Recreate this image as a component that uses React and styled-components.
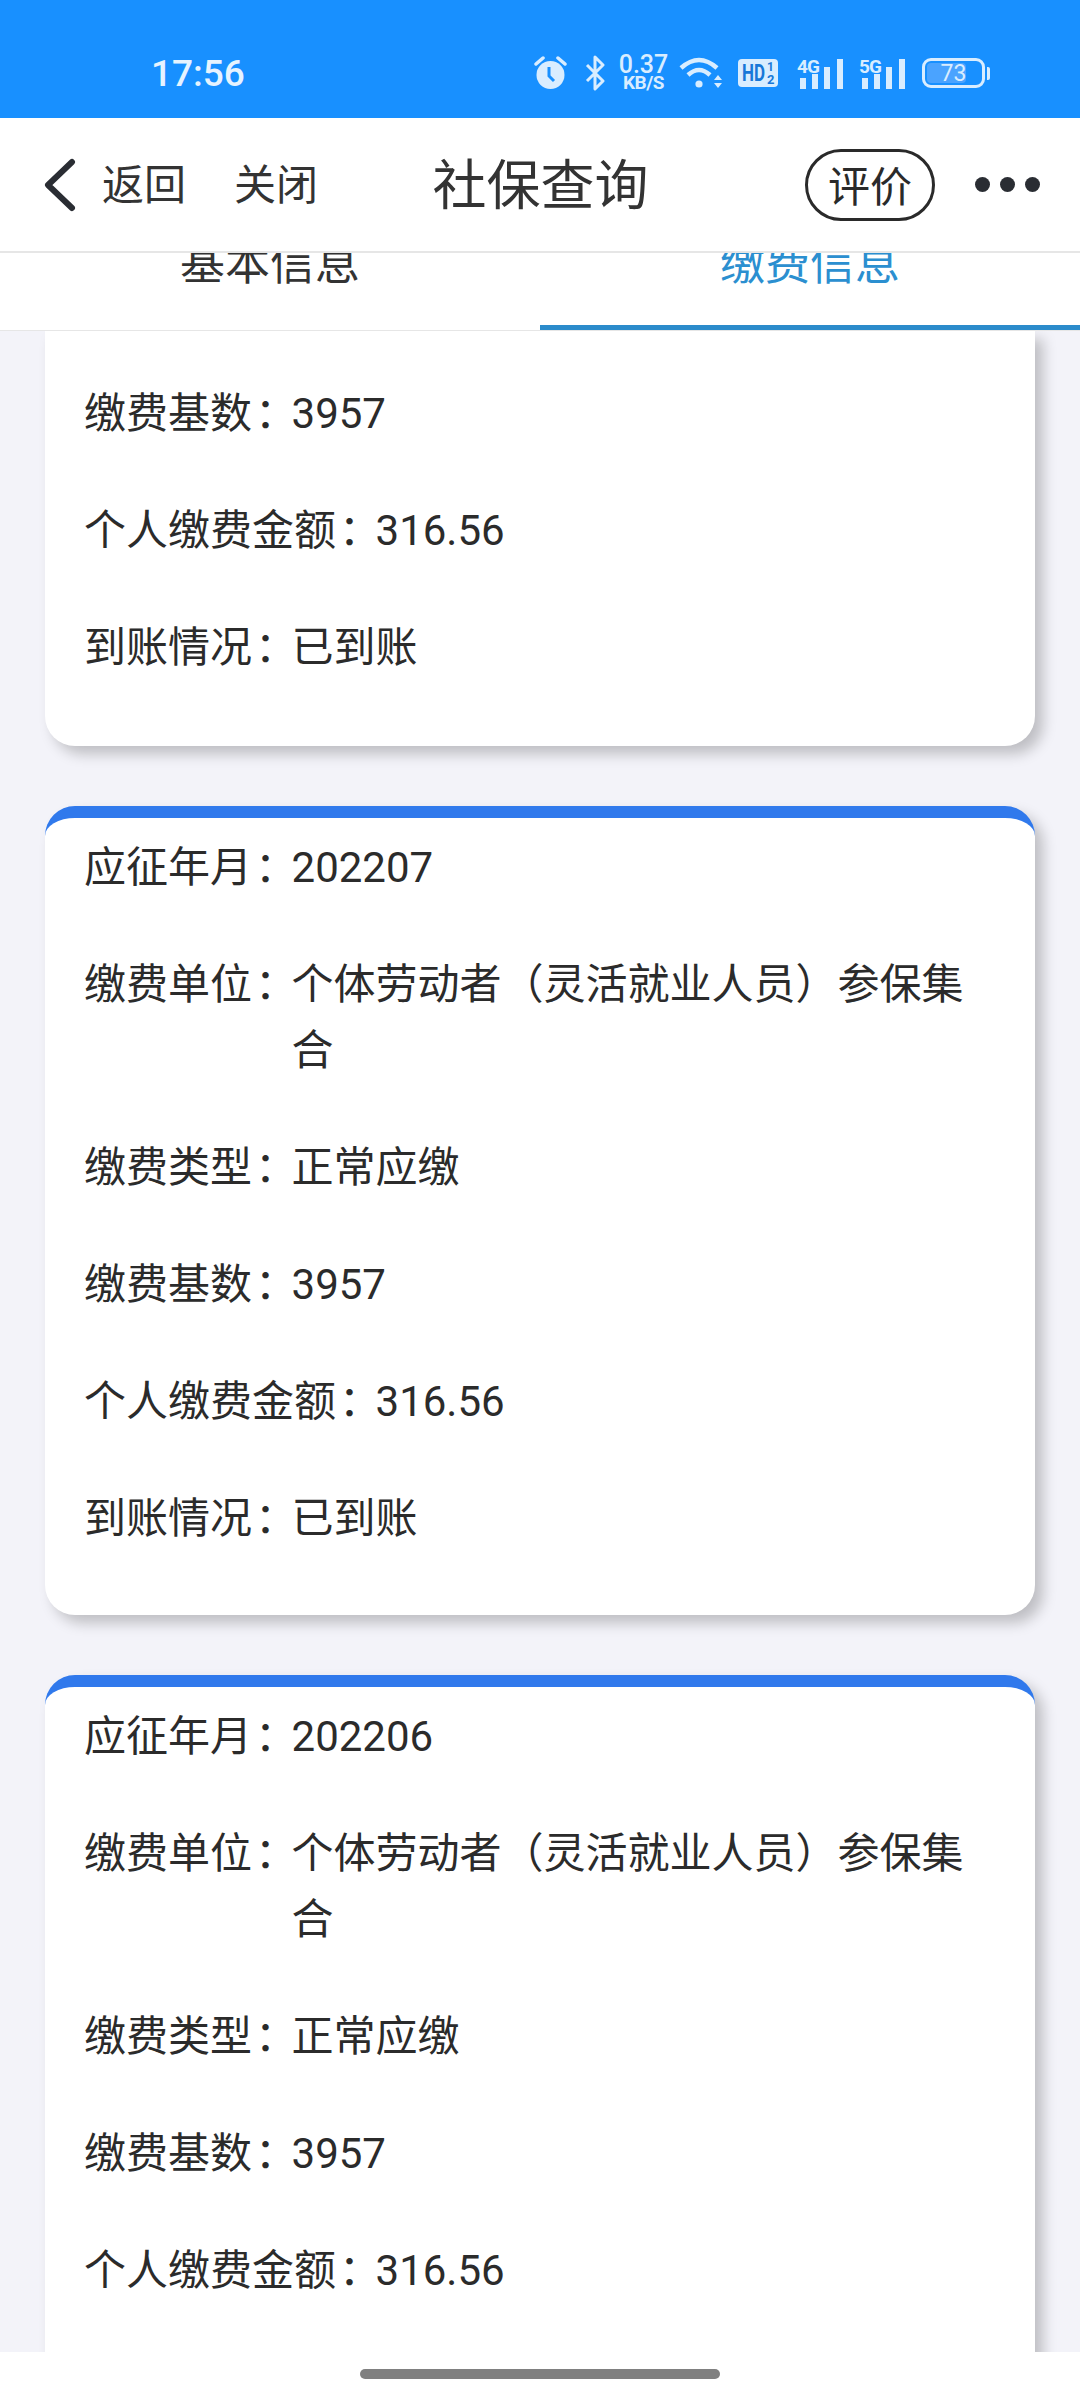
import React from "react";
import styled, { createGlobalStyle } from "styled-components";

const rows = {
  month: (m) => ["应征年月", m],
  unit: ["缴费单位", "个体劳动者（灵活就业人员）参保集合"],
  type: ["缴费类型", "正常应缴"],
  base: ["缴费基数", "3957"],
  amount: ["个人缴费金额", "316.56"],
  arrived: ["到账情况", "已到账"],
};

const cards = [
  { id: 1, cut: true, items: [rows.base, rows.amount, rows.arrived] },
  { id: 2, items: [rows.month("202207"), rows.unit, rows.type, rows.base, rows.amount, rows.arrived] },
  { id: 3, items: [rows.month("202206"), rows.unit, rows.type, rows.base, rows.amount, rows.arrived] },
];

function Signal({ label }) {
  return (
    <svg width="47" height="38" viewBox="0 -4 47 38">
      <text x="0" y="15" fontSize="19" fontWeight="700" fontFamily="Roboto, sans-serif" fill="#d9edff" letterSpacing="-1">
        {label}
      </text>
      <rect x="3" y="20" width="6" height="11" fill="#d9edff" />
      <rect x="15" y="16" width="6" height="15" fill="#d9edff" />
      <rect x="27" y="9" width="6" height="22" fill="#d9edff" />
      <rect x="40" y="1" width="6" height="30" fill="#d9edff" />
    </svg>
  );
}

function StatusIcons() {
  return (
    <StatusRight>
      <svg width="33" height="36" viewBox="0 0 33 36">
        <circle cx="16.5" cy="20" r="14" fill="#d9edff" />
        <path d="M15 12v9l5 5" fill="none" stroke="#1890ff" strokeWidth="3" />
        <path d="M2 9l7-6M31 9l-7-6" fill="none" stroke="#d9edff" strokeWidth="3.5" strokeLinecap="round" />
      </svg>
      <StatusGap $w={18} />
      <svg width="21" height="36" viewBox="0 0 21 36">
        <path d="M2 10l16 16-8 8V2l8 8L2 26" fill="none" stroke="#d9edff" strokeWidth="3" strokeLinejoin="round" />
      </svg>
      <StatusGap $w={14} />
      <NetSpeed>
        <b>0.37</b>
        <small>KB/S</small>
      </NetSpeed>
      <StatusGap $w={12} />
      <svg width="44" height="32" viewBox="0 0 44 32">
        <path d="M2 11Q20-5 38 11" fill="none" stroke="#d9edff" strokeWidth="4.5" />
        <path d="M9 18Q20 8 31 18" fill="none" stroke="#d9edff" strokeWidth="4.5" />
        <circle cx="20" cy="27" r="3.6" fill="#d9edff" />
        <path d="M39 18l4 5h-8zM35 26h8l-4 5z" fill="#d9edff" />
      </svg>
      <StatusGap $w={15} />
      <svg width="40" height="28" viewBox="0 0 40 28">
        <rect width="40" height="28" rx="4" fill="#d9edff" />
        <text x="4" y="22" fontSize="23" fontWeight="700" fontFamily="Roboto, sans-serif" fill="#1878d8" textLength="23" lengthAdjust="spacingAndGlyphs">
          HD
        </text>
        <text x="29" y="12" fontSize="12" fontWeight="700" fontFamily="Roboto, sans-serif" fill="#1878d8">
          1
        </text>
        <text x="29" y="25" fontSize="13" fontWeight="700" fontFamily="Roboto, sans-serif" fill="#1878d8">
          2
        </text>
      </svg>
      <StatusGap $w={19} />
      <Signal label="4G" />
      <StatusGap $w={15} />
      <Signal label="5G" />
      <StatusGap $w={16} />
      <Battery>
        <BatteryFill $level={73} />
        <BatteryText>73</BatteryText>
      </Battery>
      <BatteryNub />
    </StatusRight>
  );
}

export default function App() {
  return (
    <Page>
      <GlobalStyle />
      <StatusBar>
        <Clock>17:56</Clock>
        <StatusIcons />
      </StatusBar>
      <NavBar>
        <NavLeft>
          <svg width="36" height="54" viewBox="0 0 36 54">
            <path d="M31 4L7 27l24 23" fill="none" stroke="#2a2d33" strokeWidth="6" strokeLinecap="round" strokeLinejoin="round" />
          </svg>
          <NavLink $first>返回</NavLink>
          <NavLink>关闭</NavLink>
        </NavLeft>
        <Title>社保查询</Title>
        <NavRight>
          <RateButton>评价</RateButton>
          <Dots>
            <i />
            <i />
            <i />
          </Dots>
        </NavRight>
      </NavBar>
      <Tabs>
        <Tab>基本信息</Tab>
        <Tab $active>缴费信息</Tab>
      </Tabs>
      <List>
        {cards.map((card) => (
          <Card key={card.id} $cut={card.cut}>
            {card.items.map(([label, value]) => (
              <Row key={label}>
                <Label>
                  {label}
                  <Colon>：</Colon>
                </Label>
                <Value>{value}</Value>
              </Row>
            ))}
          </Card>
        ))}
      </List>
      <HomeBar>
        <HomeHandle />
      </HomeBar>
    </Page>
  );
}

const GlobalStyle = createGlobalStyle`
  html, body {
    margin: 0;
    padding: 0;
    background: #fff;
  }
  * {
    box-sizing: border-box;
  }
`;

const Page = styled.div`
  width: 1080px;
  height: 2400px;
  display: flex;
  flex-direction: column;
  overflow: hidden;
  font-family: Roboto, "Noto Sans CJK SC", sans-serif;
  color: #2b2b2b;
`;

const StatusBar = styled.div`
  height: 118px;
  flex: none;
  background: #1890ff;
  display: flex;
  align-items: center;
  justify-content: space-between;
  padding: 28px 90px 0 151px;
`;

const Clock = styled.div`
  font-size: 37px;
  font-weight: 500;
  color: #e6f3ff;
`;

const StatusRight = styled.div`
  display: flex;
  align-items: center;
`;

const StatusGap = styled.span`
  width: ${(p) => p.$w}px;
`;

const NetSpeed = styled.div`
  width: 47px;
  display: flex;
  flex-direction: column;
  align-items: center;
  color: #d9edff;
  line-height: 1;
  b {
    font-size: 25px;
    font-weight: 500;
    height: 21px;
    margin-top: -2px;
  }
  small {
    font-size: 19px;
    font-weight: 700;
    letter-spacing: -0.5px;
  }
`;

const Battery = styled.div`
  position: relative;
  width: 63px;
  height: 30px;
  border: 3px solid #d9edff;
  border-radius: 9px;
  padding: 2px;
`;

const BatteryFill = styled.div`
  width: ${(p) => p.$level}%;
  height: 100%;
  border-radius: 4px;
  background: #4aa3ff;
`;

const BatteryText = styled.span`
  position: absolute;
  inset: 0;
  display: flex;
  align-items: center;
  justify-content: center;
  font-size: 23px;
  color: #d9edff;
`;

const BatteryNub = styled.span`
  width: 3px;
  height: 13px;
  margin-left: 2px;
  border-radius: 0 2px 2px 0;
  background: #d9edff;
`;

const NavBar = styled.div`
  height: 135px;
  flex: none;
  background: #fff;
  border-bottom: 2px solid #e6e6e6;
  display: grid;
  grid-template-columns: 1fr auto 1fr;
  align-items: center;
  padding: 0 40px 0 41px;
`;

const NavLeft = styled.div`
  display: flex;
  align-items: center;
`;

const NavLink = styled.span`
  font-size: 42px;
  color: #333;
  padding-bottom: 6px;
  margin-left: ${(p) => (p.$first ? "25px" : "48px")};
`;

const Title = styled.div`
  font-size: 54px;
  color: #333;
  padding-bottom: 6px;
`;

const NavRight = styled.div`
  display: flex;
  align-items: center;
  justify-content: flex-end;
`;

const RateButton = styled.div`
  width: 130px;
  height: 72px;
  border: 3px solid #2a2a2a;
  border-radius: 36px;
  display: flex;
  align-items: center;
  justify-content: center;
  padding-bottom: 3px;
  font-size: 42px;
  color: #2a2a2a;
`;

const Dots = styled.div`
  display: flex;
  gap: 10px;
  margin-left: 40px;
  i {
    width: 15px;
    height: 15px;
    border-radius: 50%;
    background: #2a2d33;
  }
`;

const Tabs = styled.div`
  height: 78px;
  flex: none;
  display: flex;
  overflow: hidden;
  background: #fff;
  border-bottom: 1px solid #e6e6e6;
`;

const Tab = styled.div`
  flex: 1;
  display: flex;
  align-items: flex-end;
  justify-content: center;
  padding-bottom: 33px;
  line-height: 65px;
  font-size: 45px;
  color: ${(p) => (p.$active ? "#2b8fd0" : "#333")};
  box-shadow: ${(p) => (p.$active ? "inset 0 -5px 0 #2b8bcb" : "none")};
`;

const List = styled.div`
  flex: 1;
  min-height: 0;
  overflow: hidden;
  background: #f3f3f9;
  padding: 0 45px;
  display: flex;
  flex-direction: column;
  gap: 60px;
`;

const Card = styled.div`
  flex: none;
  background: #fff;
  box-shadow: 8px 8px 14px rgba(0, 0, 0, 0.22);
  border-radius: ${(p) => (p.$cut ? "0 0 30px 30px" : "30px")};
  border-top: ${(p) => (p.$cut ? "0" : "12px solid #3079ec")};
  padding: ${(p) => (p.$cut ? "50px 60px 14px 39px" : "17px 60px 12px 39px")};
`;

const Row = styled.div`
  display: flex;
  font-size: 42px;
  line-height: 66px;
  margin-bottom: 51px;
  color: #2b2b2b;
`;

const Label = styled.div`
  flex: none;
`;

const Colon = styled.span`
  padding-left: 3px;
  letter-spacing: -5.5px;
`;

const Value = styled.div`
  flex: 1;
  min-width: 0;
`;

const HomeBar = styled.div`
  height: 48px;
  flex: none;
  background: #fff;
  display: flex;
  justify-content: center;
  padding-top: 17px;
`;

const HomeHandle = styled.div`
  width: 360px;
  height: 10px;
  border-radius: 5px;
  background: #808080;
`;
